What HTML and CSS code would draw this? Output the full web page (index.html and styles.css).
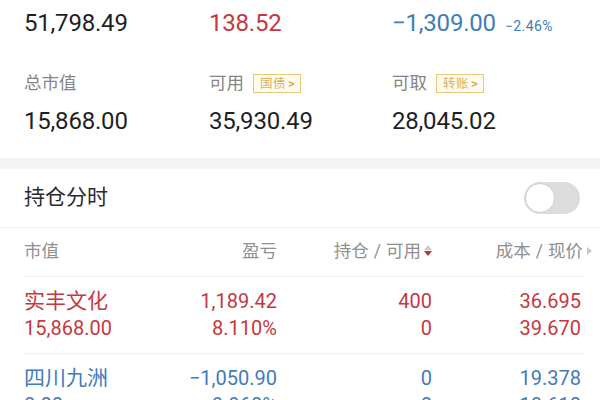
FILE: index.html
```html
<!DOCTYPE html>
<html lang="zh">
<head>
<meta charset="utf-8">
<link rel="stylesheet" href="styles.css">
</head>
<body>
<div class="summary">
  <div class="val">51,798.49</div>
  <div class="val red">138.52</div>
  <div class="val blue">−1,309.00<span class="pct">−2.46%</span></div>

  <div class="label">总市值</div>
  <div class="label">可用<span class="tag">国债<span class="chev">&gt;</span></span></div>
  <div class="label">可取<span class="tag">转账<span class="chev">&gt;</span></span></div>

  <div class="val val2">15,868.00</div>
  <div class="val val2">35,930.49</div>
  <div class="val val2">28,045.02</div>
</div>
<div class="band"></div>
<div class="pos-head">
  <div class="pos-title">持仓分时</div>
  <div class="toggle"><div class="knob"></div></div>
</div>
<div class="thead">
  <div class="th left">市值</div>
  <div class="th">盈亏</div>
  <div class="th">持仓<span class="slash">/</span>可用<span class="sort"><span class="up"></span><span class="down"></span></span></div>
  <div class="th last">成本<span class="slash">/</span>现价<span class="tri"></span></div>
</div>
<div class="trow red">
  <div class="td left"><div class="name">实丰文化</div><div>15,868.00</div></div>
  <div class="td"><div>1,189.42</div><div>8.110%</div></div>
  <div class="td"><div>400</div><div>0</div></div>
  <div class="td"><div>36.695</div><div>39.670</div></div>
</div>
<div class="trow blue">
  <div class="td left"><div class="name">四川九洲</div><div>0.00</div></div>
  <div class="td"><div>−1,050.90</div><div>−9.960%</div></div>
  <div class="td"><div>0</div><div>0</div></div>
  <div class="td"><div>19.378</div><div>18.610</div></div>
</div>
</body>
</html>
```
FILE: styles.css
```css
html, body {
  margin: 0;
  padding: 0;
  background: #fff;
}
body {
  width: 600px;
  height: 400px;
  overflow: hidden;
  font-family: Roboto, "Noto Sans CJK SC", sans-serif;
  color: #222;
}
.summary {
  display: grid;
  grid-template-columns: 185px 183px 1fr;
  padding: 8px 0 22px 24px;
}
.val {
  font-size: 24px;
  line-height: 30px;
  letter-spacing: -0.2px;
  color: #1f1f1f;
  white-space: nowrap;
}
.val2 {
  margin-top: 12px;
}
.red { color: #c5383f; }
.blue { color: #3f7cbb; }
.val.red { color: #c5383f; }
.val.blue { color: #3f7cbb; }
.pct {
  font-size: 14px;
  margin-left: 9px;
  letter-spacing: 0.4px;
}
.label {
  margin-top: 31px;
  font-size: 17.5px;
  line-height: 22px;
  color: #858585;
  display: flex;
  align-items: center;
}
.tag {
  display: inline-flex;
  align-items: center;
  margin-left: 9px;
  height: 17px;
  padding: 0 5px 0 6px;
  border: 1px solid #e7c97c;
  background: #fffbee;
  color: #d6b060;
  font-size: 12.5px;
  line-height: 17px;
  letter-spacing: 0.5px;
}
.chev {
  margin-left: 2px;
  font-size: 13px;
  font-weight: bold;
}
.band {
  height: 11px;
  background: #f4f4f4;
}
.pos-head {
  display: flex;
  justify-content: space-between;
  align-items: center;
  height: 58px;
  padding: 0 20px 0 24px;
  border-bottom: 1px solid #efefef;
}
.pos-title {
  font-size: 21px;
  line-height: 24px;
  color: #2a2a2a;
  margin-top: -2px;
}
.toggle {
  width: 56px;
  height: 32px;
  border-radius: 16px;
  background: #dcdcdc;
  position: relative;
}
.knob {
  position: absolute;
  left: 1px;
  top: 1px;
  width: 28px;
  height: 28px;
  border-radius: 50%;
  background: #fff;
  border: 1px solid #cfcfcf;
}
.thead, .trow {
  display: grid;
  grid-template-columns: 120px 133px 155px 149px;
  margin: 0 16px 0 24px;
  border-bottom: 1px solid #efefef;
}
.thead {
  height: 48px;
  align-items: center;
}
.th {
  font-size: 17.5px;
  line-height: 22px;
  color: #8f8f8f;
  text-align: right;
  display: flex;
  justify-content: flex-end;
  align-items: center;
  margin-top: -3px;
}
.slash {
  margin: 0 5px;
}
.th.left {
  justify-content: flex-start;
}
.th.last {
  margin-right: -11px;
}
.sort {
  display: inline-flex;
  flex-direction: column;
  margin-left: 3px;
  gap: 1px;
}
.up {
  width: 0;
  height: 0;
  border-left: 4px solid transparent;
  border-right: 4px solid transparent;
  border-bottom: 5px solid #c8cfc9;
}
.down {
  width: 0;
  height: 0;
  border-left: 4px solid transparent;
  border-right: 4px solid transparent;
  border-top: 5px solid #b7333a;
}
.tri {
  margin-left: 4px;
  width: 0;
  height: 0;
  border-top: 4px solid transparent;
  border-bottom: 4px solid transparent;
  border-left: 5px solid #c9c9c9;
}
.trow {
  padding: 11px 0;
}
.td {
  font-size: 20px;
  line-height: 27px;
  text-align: right;
  white-space: nowrap;
}
.td.left {
  text-align: left;
}
.name {
  font-size: 21px;
}
.trow.red .td { color: #c5383f; }
.trow.blue .td { color: #3f7cbb; }
```
